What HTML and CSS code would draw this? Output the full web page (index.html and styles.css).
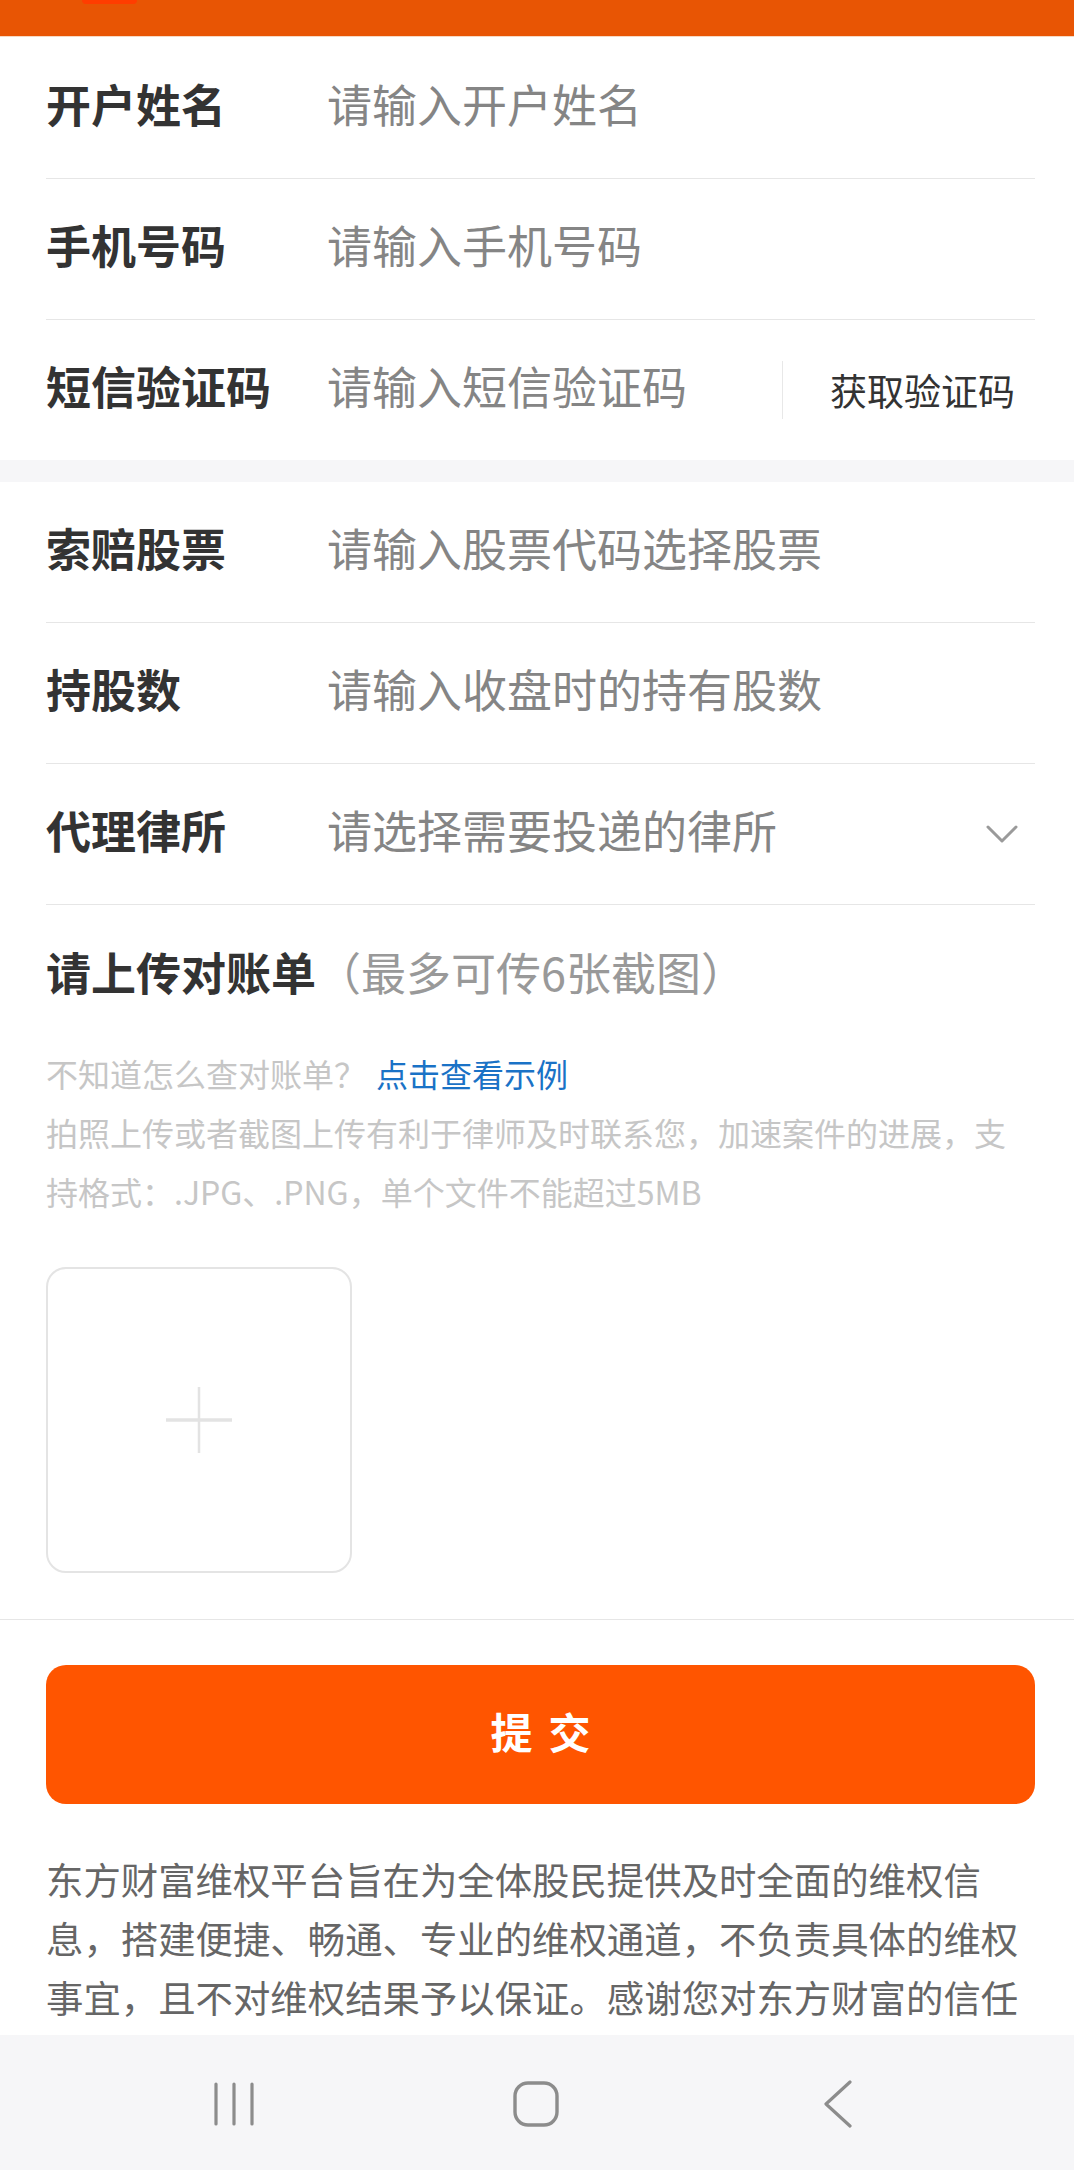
FILE: index.html
```html
<!DOCTYPE html>
<html lang="zh-CN">
<head>
<meta charset="utf-8">
<title>维权登记</title>
<link rel="stylesheet" href="styles.css">
</head>
<body>
<div class="page">
  <header class="topbar"><div class="tab"></div></header>

  <section class="group first">
    <div class="row">
      <div class="label">开户姓名</div>
      <div class="ph">请输入开户姓名</div>
    </div>
    <div class="row">
      <div class="label">手机号码</div>
      <div class="ph">请输入手机号码</div>
    </div>
    <div class="row last">
      <div class="label">短信验证码</div>
      <div class="ph grow">请输入短信验证码</div>
      <div class="sms">获取验证码</div>
    </div>
  </section>

  <div class="band"></div>

  <section class="group">
    <div class="row">
      <div class="label">索赔股票</div>
      <div class="ph">请输入股票代码选择股票</div>
    </div>
    <div class="row">
      <div class="label">持股数</div>
      <div class="ph">请输入收盘时的持有股数</div>
    </div>
    <div class="row">
      <div class="label">代理律所</div>
      <div class="ph grow">请选择需要投递的律所</div>
      <svg class="chev" width="32" height="20" viewBox="0 0 32 20"><polyline points="2,3 16,17 30,3" fill="none" stroke="#9a9a9a" stroke-width="3" stroke-linecap="round" stroke-linejoin="round"/></svg>
    </div>
  </section>

  <section class="upload">
    <div class="up-title"><span class="strong">请上传对账单</span><span class="sub">（最多可传6张截图）</span></div>
    <div class="hint">不知道怎么查对账单？<span class="link">点击查看示例</span></div>
    <div class="desc">拍照上传或者截图上传有利于律师及时联系您，加速案件的进展，支持格式：.JPG、.PNG，单个文件不能超过5MB</div>
    <div class="picker">
      <svg width="68" height="68" viewBox="0 0 68 68"><line x1="34" y1="1" x2="34" y2="67" stroke="#e3e3e3" stroke-width="2.5"/><line x1="1" y1="34" x2="67" y2="34" stroke="#e3e3e3" stroke-width="3.5"/></svg>
    </div>
  </section>

  <section class="actions">
    <button class="submit">提交</button>
    <p class="notice">东方财富维权平台旨在为全体股民提供及时全面的维权信息，搭建便捷、畅通、专业的维权通道，不负责具体的维权事宜，且不对维权结果予以保证。感谢您对东方财富的信任与支持！</p>
  </section>
</div>

<nav class="sysnav">
  <div class="navcell">
    <svg width="40" height="44" viewBox="0 0 40 44"><g stroke="#8c8c8c" stroke-width="3.2" stroke-linecap="round"><line x1="2" y1="2" x2="2" y2="42"/><line x1="20" y1="2" x2="20" y2="42"/><line x1="38" y1="2" x2="38" y2="42"/></g></svg>
  </div>
  <div class="navcell">
    <svg width="46" height="46" viewBox="0 0 46 46"><rect x="2" y="2" width="42" height="42" rx="13" fill="none" stroke="#8c8c8c" stroke-width="3.4"/></svg>
  </div>
  <div class="navcell">
    <svg width="30" height="48" viewBox="0 0 30 48"><polyline points="27,2 3,24 27,46" fill="none" stroke="#8c8c8c" stroke-width="3.2" stroke-linecap="round" stroke-linejoin="round"/></svg>
  </div>
</nav>
</body>
</html>
```

FILE: styles.css
```css
* { box-sizing: border-box; }

html, body {
  margin: 0;
  padding: 0;
}

body {
  width: 1074px;
  height: 2170px;
  overflow: hidden;
  background: #ffffff;
  font-family: "Noto Sans CJK SC", "Noto Sans", sans-serif;
  color: #333333;
}

.topbar {
  height: 36px;
  background: #e85504;
  box-shadow: 0 1px 0 #f7d9c2;
  display: flex;
}

.tab {
  margin-left: 82px;
  width: 55px;
  height: 4px;
  background: #ff3d00;
  border-radius: 0 0 8px 8px;
}

.group.first {
  padding-top: 2px;
}

.row {
  display: flex;
  align-items: center;
  height: 141px;
  margin: 0 39px 0 46px;
  border-bottom: 1px solid #e6e6e6;
}

.row.last {
  border-bottom: none;
  height: 140px;
}

.label {
  width: 281px;
  flex-shrink: 0;
  font-size: 45px;
  font-weight: 700;
  color: #333333;
  line-height: 1;
  padding-bottom: 10px;
}

.ph {
  font-size: 45px;
  color: #858585;
  line-height: 1;
  padding-bottom: 10px;
}

.grow {
  flex: 1;
}

.sms {
  display: flex;
  align-items: center;
  height: 58px;
  border-left: 1px solid #e8e8e8;
  padding-left: 47px;
  padding-right: 20px;
  font-size: 37px;
  color: #333333;
  line-height: 1;
}

.chev {
  margin-right: 17px;
}

.band {
  height: 22px;
  background: #f6f6f8;
}

.upload {
  padding: 37px 39px 46px 46px;
  border-bottom: 1px solid #e6e6e6;
}

.up-title {
  font-size: 45px;
  line-height: 60px;
}

.strong {
  font-weight: 700;
  color: #333333;
}

.sub {
  color: #999999;
}

.hint {
  margin-top: 42px;
  font-size: 32px;
  line-height: 59px;
  color: #c6c6c6;
}

.link {
  margin-left: 10px;
  color: #1a72c6;
}

.desc {
  font-size: 32px;
  line-height: 59px;
  color: #c6c6c6;
}

.picker {
  margin-top: 46px;
  width: 306px;
  height: 306px;
  border: 2px solid #e4e4e4;
  border-radius: 20px;
  display: flex;
  align-items: center;
  justify-content: center;
}

.actions {
  padding: 45px 39px 0 46px;
}

.submit {
  display: block;
  width: 100%;
  height: 139px;
  border: none;
  border-radius: 20px;
  background: #ff5500;
  color: #ffffff;
  font-family: "Noto Sans CJK SC", sans-serif;
  font-size: 42px;
  font-weight: 700;
  letter-spacing: 16px;
  padding: 0 0 8px 16px;
  line-height: 1;
}

.notice {
  margin: 46px 0 0 0;
  font-size: 37.4px;
  line-height: 59px;
  color: #666666;
}

.sysnav {
  position: fixed;
  left: 0;
  right: 0;
  bottom: 0;
  height: 135px;
  background: #f6f6f8;
  display: flex;
  align-items: center;
  padding: 3px 0 0 184px;
  gap: 202px;
}

.navcell {
  width: 100px;
  display: flex;
  justify-content: center;
  align-items: center;
}
```
